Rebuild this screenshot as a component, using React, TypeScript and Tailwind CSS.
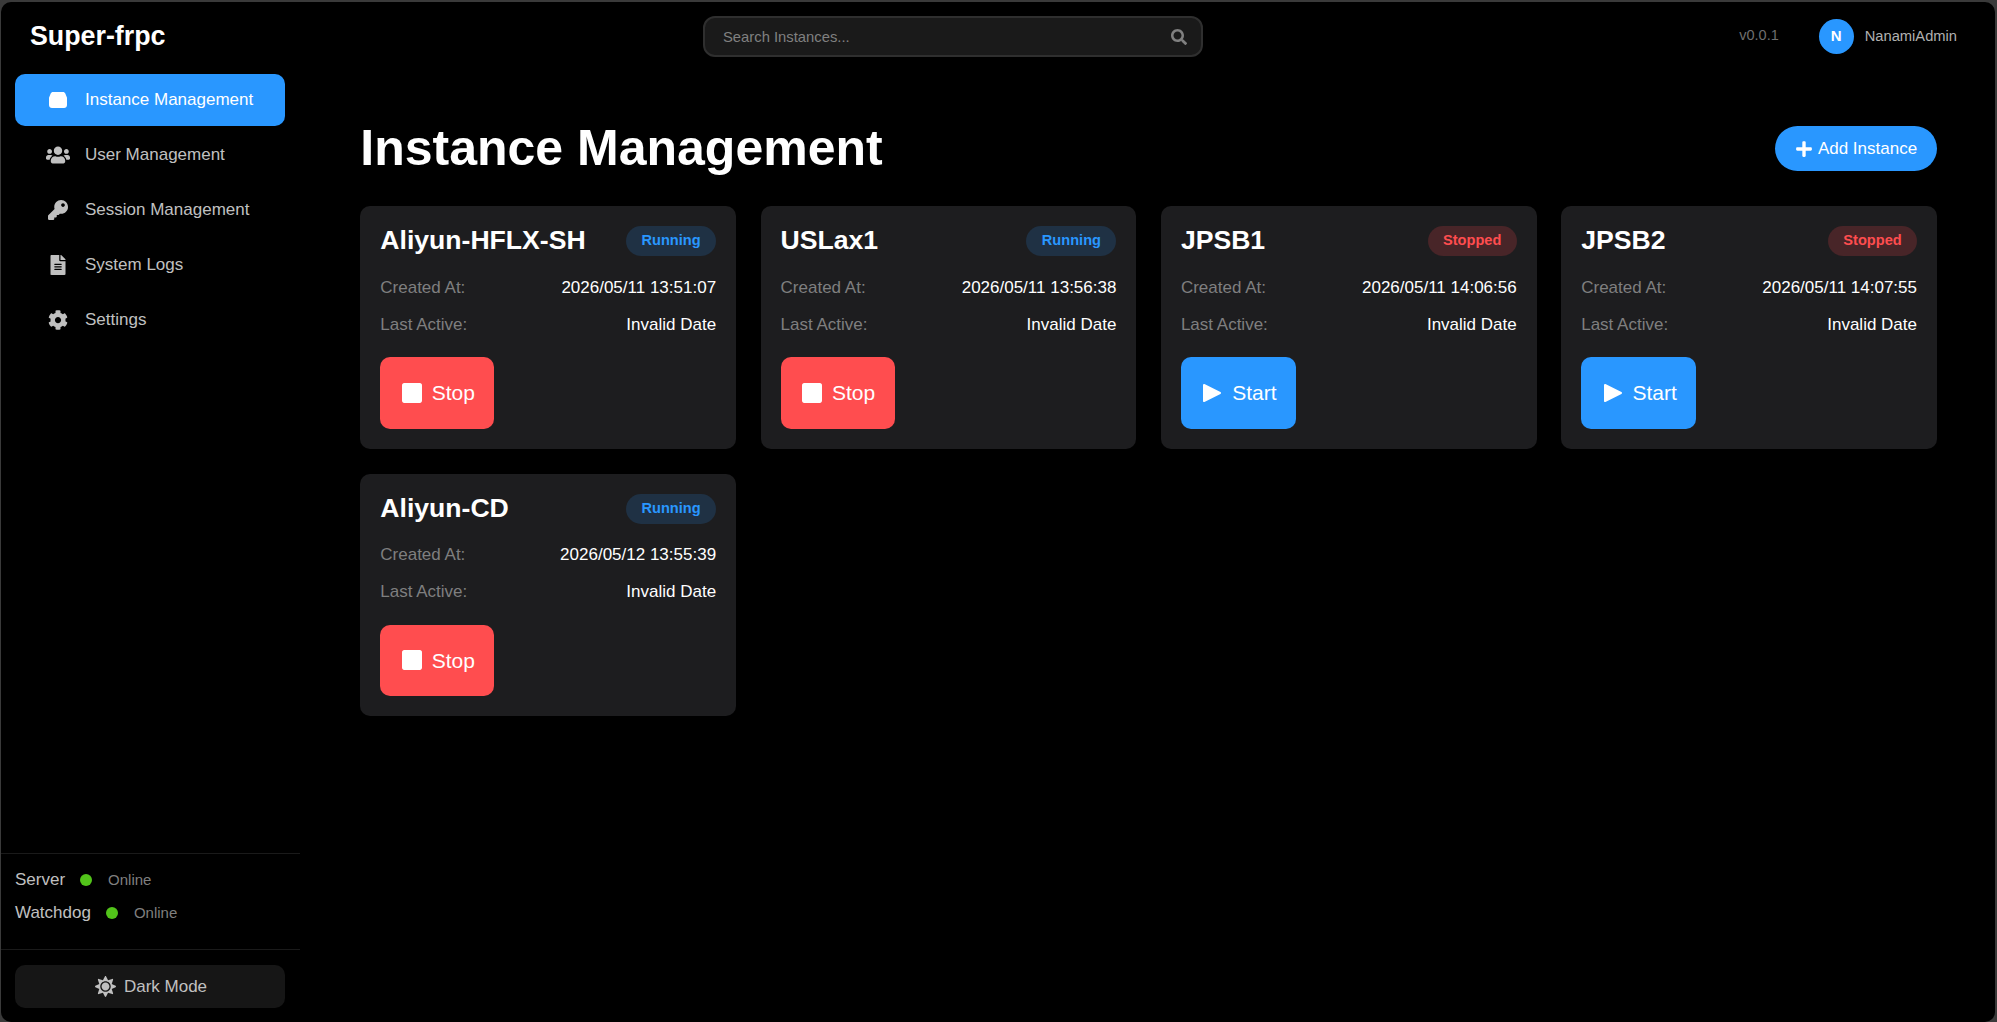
import React from 'react';
import { FaKey, FaFileAlt, FaCog, FaSearch, FaPlus, FaStop, FaSun, FaUsers } from 'react-icons/fa';

interface Instance {
  name: string;
  createdAt: string;
  running: boolean;
}

const instances: Instance[] = [
  { name: 'Aliyun-HFLX-SH', createdAt: '2026/05/11 13:51:07', running: true },
  { name: 'USLax1', createdAt: '2026/05/11 13:56:38', running: true },
  { name: 'JPSB1', createdAt: '2026/05/11 14:06:56', running: false },
  { name: 'JPSB2', createdAt: '2026/05/11 14:07:55', running: false },
  { name: 'Aliyun-CD', createdAt: '2026/05/12 13:55:39', running: true },
];

function BoxIcon({ className }: { className?: string }) {
  return (
    <svg className={className} viewBox="0 0 18 16" fill="currentColor">
      <path d="M4 0h10c1 0 2 .7 2.3 1.6l1.2 2.9c.3.5.5 1 .5 1.5v7c0 1.7-1.3 3-3 3H3c-1.7 0-3-1.3-3-3V6c0-.5.2-1 .5-1.5l1.2-2.9C2 .7 3 0 4 0z" />
    </svg>
  );
}

const navItems = [
  { label: 'Instance Management', icon: BoxIcon, iconClass: 'h-[16px] w-[18px]', active: true },
  { label: 'User Management', icon: FaUsers, iconClass: 'h-[20px] w-[24px]', active: false },
  { label: 'Session Management', icon: FaKey, iconClass: 'size-[20px]', active: false },
  { label: 'System Logs', icon: FaFileAlt, iconClass: 'size-[20px]', active: false },
  { label: 'Settings', icon: FaCog, iconClass: 'size-[20px]', active: false },
];

function InstanceCard({ instance }: { instance: Instance }) {
  return (
    <div className="h-[242.6px] rounded-[10px] bg-[#1d1d1f] p-5">
      <div className="flex h-[30px] items-center justify-between">
        <h3 className="text-[26.6px] font-bold text-white">{instance.name}</h3>
        {instance.running ? (
          <span className="flex h-[30px] w-[90px] items-center justify-center rounded-full bg-[#1f3144] text-[14.6px] font-bold text-[#2997ff]">
            Running
          </span>
        ) : (
          <span className="flex h-[30px] w-[89px] items-center justify-center rounded-full bg-[#482528] text-[14.6px] font-bold text-[#ff4d4f]">
            Stopped
          </span>
        )}
      </div>
      <div className="mt-[21px] flex h-[21px] items-center justify-between text-[17px]">
        <span className="text-[#7f7f7f]">Created At:</span>
        <span className="text-white">{instance.createdAt}</span>
      </div>
      <div className="mt-[16px] flex h-[21px] items-center justify-between text-[17px]">
        <span className="text-[#7f7f7f]">Last Active:</span>
        <span className="text-white">Invalid Date</span>
      </div>
      <button
        className={`mt-[22px] flex h-[71.6px] items-center justify-center gap-[10px] rounded-[10px] pl-[2px] text-[21px] text-white ${
          instance.running ? 'w-[114px] bg-[#ff4d4f]' : 'w-[115px] bg-[#2997ff]'
        }`}
      >
        {instance.running ? (
          <FaStop className="h-[26px] w-[20px]" />
        ) : (
          <svg className="size-[20px]" viewBox="0 0 20 20" fill="currentColor" stroke="currentColor" strokeWidth={2} strokeLinejoin="round">
            <path d="M2 2l16 8-16 8z" />
          </svg>
        )}
        {instance.running ? 'Stop' : 'Start'}
      </button>
    </div>
  );
}

export default function App() {
  return (
    <div className="h-[1022px] w-[1997px] overflow-hidden bg-[#3a3a3a] pt-[2px] pr-[2px] pl-px font-['Liberation_Sans',Arial,sans-serif]">
      <div className="flex h-[1020px] rounded-[10px] bg-black">
        {/* Sidebar */}
        <aside className="flex w-[299px] shrink-0 flex-col">
          <div className="flex h-[68px] items-center pl-[29px] text-[26.8px] font-bold text-white">Super-frpc</div>
          <nav className="flex flex-col gap-[3px] pt-[4px] pr-[15px] pl-[14px]">
            {navItems.map((item) => (
              <div
                key={item.label}
                className={`flex h-[52px] items-center rounded-[10px] text-[17px] ${
                  item.active ? 'bg-[#2997ff] text-white' : 'text-[#c0c0c0]'
                }`}
              >
                <span className="flex w-[70px] shrink-0 justify-center pl-[16px]">
                  <item.icon className={item.iconClass} />
                </span>
                {item.label}
              </div>
            ))}
          </nav>
          <div className="mt-auto border-t border-[#1a1a1a] pt-[14px] pr-[15px] pb-[24px] pl-[14px]">
            <div className="flex h-[24px] items-center text-[17px] text-[#c0c0c0]">
              Server
              <span className="ml-[15px] size-3 rounded-full bg-[#52c41a]" />
              <span className="ml-[16px] text-[15px] text-[#7f7f7f]">Online</span>
            </div>
            <div className="mt-[9px] flex h-[24px] items-center text-[17px] text-[#c0c0c0]">
              Watchdog
              <span className="ml-[15px] size-3 rounded-full bg-[#52c41a]" />
              <span className="ml-[16px] text-[15px] text-[#7f7f7f]">Online</span>
            </div>
          </div>
          <div className="border-t border-[#1a1a1a] pt-[15px] pr-[15px] pb-[14px] pl-[14px]">
            <button className="flex h-[43px] w-full items-center justify-center gap-2 rounded-[10px] bg-[#161616] pl-[2px] text-[17px] text-[#c0c0c0]">
              <FaSun className="size-[21px]" />
              Dark Mode
            </button>
          </div>
        </aside>

        {/* Main */}
        <main className="flex min-w-0 flex-1 flex-col">
          <header className="relative flex h-[68px] items-center justify-end pr-[38px]">
            <div className="absolute top-[14px] left-[403px] flex h-[41px] w-[500px] items-center justify-between rounded-xl border-2 border-[#2f2f2f] bg-[#1a1a1a] pr-[14px] pl-[18px]">
              <span className="pt-px text-[14.8px] text-[#808080]">Search Instances...</span>
              <FaSearch className="size-[16px] text-[#808080]" />
            </div>
            <span className="text-[14.5px] text-[#6f6f6f]">v0.0.1</span>
            <span className="ml-[40px] flex size-[35px] items-center justify-center rounded-full bg-[#2997ff] text-[15px] font-bold text-white">
              N
            </span>
            <span className="ml-[11px] text-[14.7px] text-[#b0b0b0]">NanamiAdmin</span>
          </header>

          <div className="pt-[56px] pr-[58px] pl-[60.3px]">
            <div className="flex h-[45px] items-center justify-between">
              <h1 className="-mt-[1px] text-[50px] font-bold text-white">Instance Management</h1>
              <button className="flex h-[45px] w-[162px] items-center justify-center gap-[5px] rounded-full bg-[#2997ff] text-[17px] text-white">
                <FaPlus className="size-[18px]" />
                Add Instance
              </button>
            </div>
            <div className="mt-[35px] grid grid-cols-4 gap-x-[24.5px] gap-y-[25px]">
              {instances.map((instance) => (
                <InstanceCard key={instance.name} instance={instance} />
              ))}
            </div>
          </div>
        </main>
      </div>
    </div>
  );
}
